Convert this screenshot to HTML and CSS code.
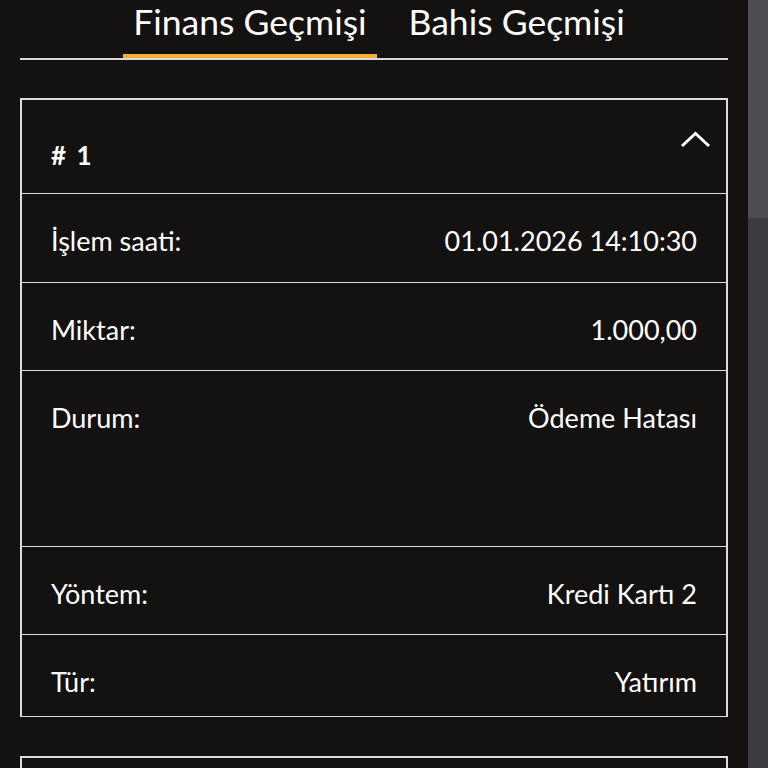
FILE: index.html
```html
<!DOCTYPE html>
<html lang="tr">
<head>
<meta charset="utf-8">
<link rel="stylesheet" href="styles.css">
</head>
<body>
<div class="frame">
  <main class="page">
    <nav class="tabs">
      <div class="tab active">Finans Geçmişi</div>
      <div class="tab">Bahis Geçmişi</div>
    </nav>
    <section class="card">
      <div class="card-head">
        <span class="num"># 1</span>
        <svg class="chev" width="31" height="17" viewBox="0 0 31 17"><path d="M2 15 L15.5 2.5 L29 15" fill="none" stroke="#fff" stroke-width="3"/></svg>
      </div>
      <div class="row r1"><span>İşlem saati:</span><span>01.01.2026 14:10:30</span></div>
      <div class="row r2"><span>Miktar:</span><span>1.000,00</span></div>
      <div class="row r3"><span>Durum:</span><span>Ödeme Hatası</span></div>
      <div class="row r4"><span>Yöntem:</span><span>Kredi Kartı 2</span></div>
      <div class="row r5"><span>Tür:</span><span>Yatırım</span></div>
    </section>
    <section class="card next"></section>
  </main>
  <div class="scrollbar"><div class="thumb"></div></div>
</div>
</body>
</html>
```

FILE: styles.css
```css
html, body {
  margin: 0;
  padding: 0;
  height: 768px;
  overflow: hidden;
  background: #141111;
}
body {
  font-family: Lato, "Noto Sans", sans-serif;
  color: #fff;
}
.frame {
  display: flex;
  height: 768px;
}
.page {
  width: 708px;
  padding: 0 20px;
  flex: none;
}
.scrollbar {
  width: 20px;
  flex: none;
  background: #3b3c3f;
  display: flex;
  flex-direction: column;
}
.thumb {
  height: 218px;
  background: #4d4e51;
}
.tabs {
  display: flex;
  justify-content: center;
  gap: 22px;
  padding-left: 10px;
  border-bottom: 2px solid #d8d8d8;
  height: 60px;
  box-sizing: border-box;
}
.tab {
  font-size: 35.5px;
  line-height: 44px;
  padding: 0 10px;
  box-sizing: border-box;
  height: 58px;
  border-bottom: 4px solid transparent;
}
.tab.active {
  border-bottom-color: #f2b134;
}
.card {
  margin-top: 38px;
  border: 2px solid #dcdcdc;
  border-bottom-width: 1px;
}
.card-head {
  height: 93px;
  box-sizing: border-box;
  display: flex;
  justify-content: space-between;
  align-items: flex-start;
  padding: 0 15px 0 29px;
}
.num {
  font-weight: 700;
  font-size: 26px;
  line-height: 30px;
  margin-top: 40px;
  word-spacing: 4px;
}
.chev {
  margin-top: 31px;
}
.row {
  display: flex;
  justify-content: space-between;
  border-top: 1px solid #dcdcdc;
  box-sizing: border-box;
  padding: 31px 29px 0 29px;
  font-size: 27px;
  line-height: 32px;
}
.r1 { height: 89px; }
.r2 { height: 88px; }
.r3 { height: 176px; }
.r4 { height: 88px; }
.r5 { height: 82px; }
.next {
  margin-top: 39px;
  height: 40px;
  border-bottom: none;
}
```
